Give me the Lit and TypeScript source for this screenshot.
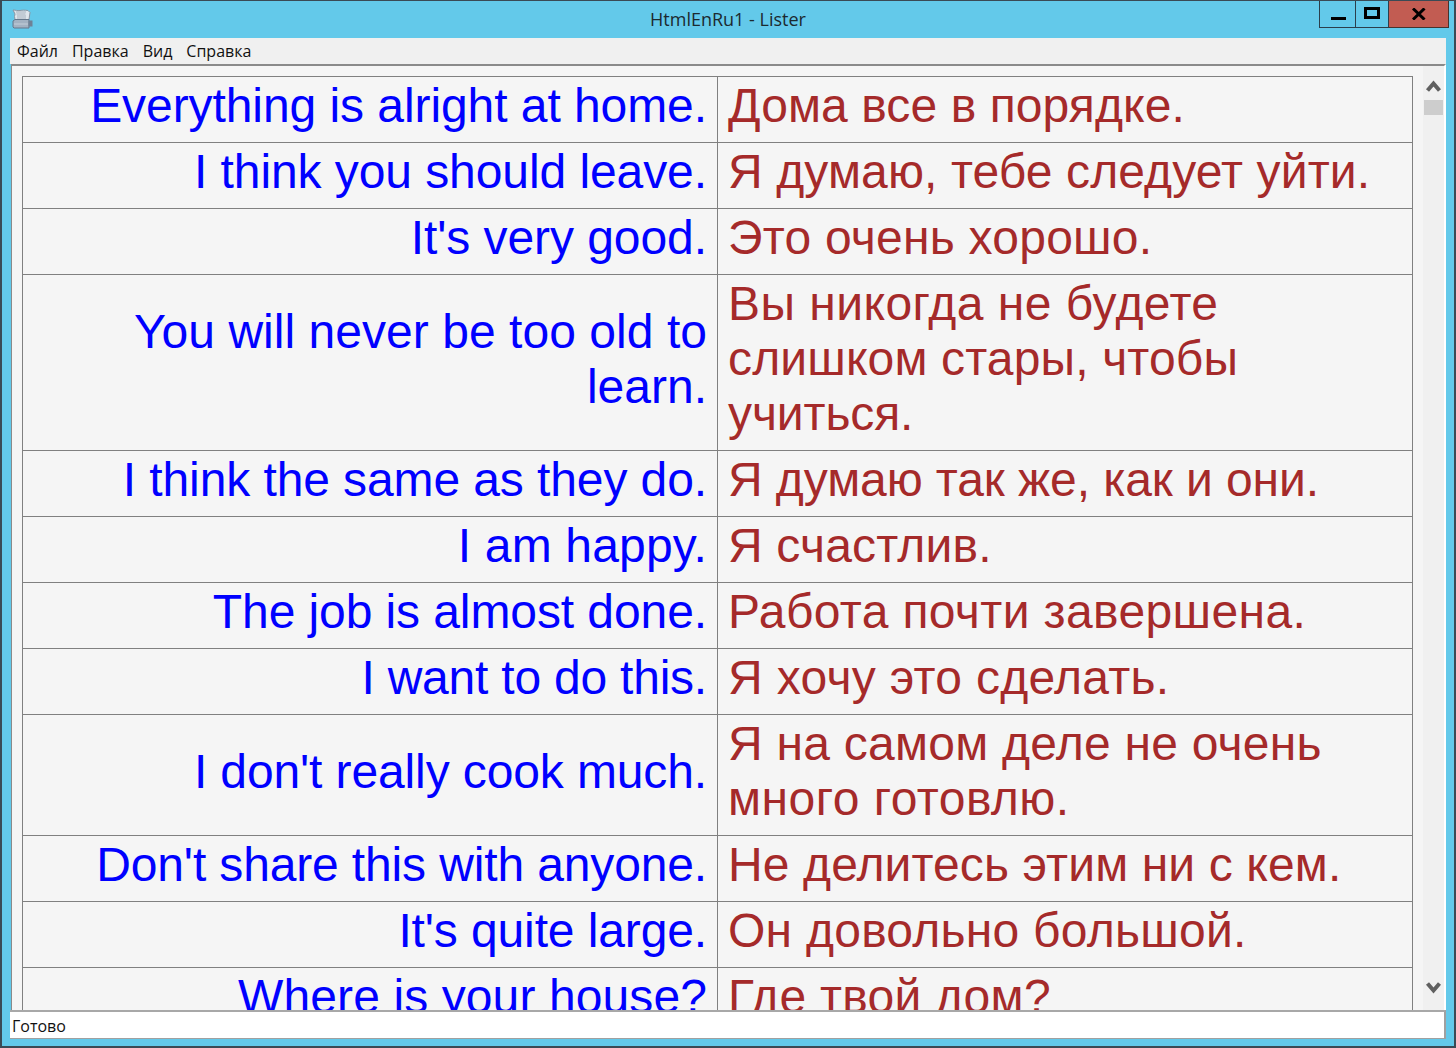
import { LitElement, html, css, svg } from "lit";
import { customElement } from "lit/decorators.js";

type Line = [string, number];
const ROWS: { en: Line[]; ru: Line[] }[] = [
  { en: [["Everything is alright at home.", -0.07]], ru: [["Дома все в порядке.", 0.1]] },
  { en: [["I think you should leave.", -0.08]], ru: [["Я думаю, тебе следует уйти.", 0.12]] },
  { en: [["It's very good.", -0.07]], ru: [["Это очень хорошо.", 0.24]] },
  {
    en: [["You will never be too old to", 0.04], ["learn.", 0]],
    ru: [["Вы никогда не будете", 0.45], ["слишком стары, чтобы", 0.15], ["учиться.", -0.1]],
  },
  { en: [["I think the same as they do.", -0.1]], ru: [["Я думаю так же, как и они.", -0.08]] },
  { en: [["I am happy.", 0.18]], ru: [["Я счастлив.", 0.18]] },
  { en: [["The job is almost done.", -0.09]], ru: [["Работа почти завершена.", 0.39]] },
  { en: [["I want to do this.", -0.22]], ru: [["Я хочу это сделать.", 0.32]] },
  {
    en: [["I don't really cook much.", -0.12]],
    ru: [["Я на самом деле не очень", 0.25], ["много готовлю.", 0.5]],
  },
  { en: [["Don't share this with anyone.", -0.14]], ru: [["Не делитесь этим ни с кем.", 0.12]] },
  { en: [["It's quite large.", -0.12]], ru: [["Он довольно большой.", 0.25]] },
  { en: [["Where is your house?", 0.1]], ru: [["Где твой дом?", 0.3]] },
];

@customElement("app-root")
export class AppRoot extends LitElement {
  static styles = css`
    :host { display: block; width: 1456px; height: 1048px; }
    .window {
      box-sizing: border-box; width: 1456px; height: 1048px;
      background: #63c9ea; border: 2px solid #3a4a55; border-width: 1px 2px 2px 2px;
      display: flex; flex-direction: column;
      font-family: "Liberation Sans", Arial, sans-serif; overflow: hidden;
    }
    .titlebar { height: 37px; flex: none; display: flex; position: relative; }
    .app-icon { margin: 8px 0 0 10px; width: 21px; height: 21px; }
    .title {
      position: absolute; left: 0; right: 0; top: 8px; text-align: center;
      font: 18px/20px "Open Sans", "Noto Sans", sans-serif; color: #1c2a30;
    }
    .caption { position: absolute; top: -1px; left: 1317px; display: flex; height: 28px; }
    .btn {
      box-sizing: border-box; height: 28px; border: 1px solid #2b3f4c; border-top: 0;
      display: flex; align-items: center; justify-content: center;
    }
    .btn.min { width: 37px; }
    .btn.max { width: 33px; border-left: 0; }
    .btn.close { width: 60px; background: #c25c52; border-left: 0; border-color: #46332f; }
    .client { margin: 0 8px 7px 8px; flex: 1; display: flex; flex-direction: column; min-height: 0; }
    .menubar {
      height: 26px; flex: none; background: #f0f0f0; display: flex; gap: 14px;
      padding-left: 7px; align-items: center;
      font: 16px/18px "Open Sans", "Noto Sans", sans-serif; color: #111;
    }
    .view {
      flex: 1; min-height: 0; display: flex; background: #f5f5f5;
      border-top: 2px solid #8a8a8a; margin-left: 1px;
      border-left: 1px solid #8a8a8a; border-right: 2px solid #fff; overflow: hidden;
    }
    .scrollpane { flex: 1; min-width: 0; overflow: hidden; padding: 10px 10px 0 10px; }
    table {
      width: 1391px; border-collapse: collapse; table-layout: fixed;
      font-size: 48px; line-height: 55px;
    }
    td { border: 1px solid #808080; padding: 1px 10px 9px; box-sizing: border-box; vertical-align: middle; }
    td.en { color: #0000ff; text-align: right; width: 695px; }
    td.ru { color: #a52a2a; text-align: left; }
    .ln { display: block; white-space: nowrap; }
    .scrollbar {
      width: 21px; flex: none; background: #f0f0f0; display: flex; flex-direction: column;
      align-items: center;
    }
    .arrow { width: 17px; height: 14px; }
    .arrow.up { margin-top: 14px; }
    .arrow.down { margin-top: auto; margin-bottom: 16px; }
    .thumb { width: 19px; height: 15px; background: #cdcdcd; margin-top: 6px; }
    .status {
      height: 29px; flex: none; background: #fff; box-sizing: border-box;
      border-top: 2px solid #a8a8a8; border-bottom: 1px solid #a0a0a0; border-right: 2px solid #a0a0a0;
      display: flex; align-items: center;
      font: 16px/18px "Open Sans", "Noto Sans", sans-serif; color: #111; padding: 2px 0 0 2px;
    }
  `;

  private icon() {
    return svg`<svg class="app-icon" viewBox="0 0 21 21">
      <path d="M1 1c3 0 4 1 7 .5s4-.5 8 0l2 2-1 7H3l-.5-3L3 5z" fill="#dfe6ec" stroke="#8a96a3" stroke-width="1"/>
      <path d="M4 3h10M4.500 5h9M5 7h9M5 9h9" stroke="#a4b0bc" stroke-width="1"/>
      <path d="M1 12l2-1.500h14V19H2l-1-1z" fill="#a3b2c2" stroke="#66778a" stroke-width="1"/>
      <path d="M2 15h14" stroke="#c3ced9" stroke-width="1"/>
      <rect x="16.500" y="11.500" width="4" height="6" fill="#6f8196"/>
    </svg>`;
  }

  private cell(lines: Line[]) {
    return lines.map(
      ([t, sp]) => html`<span class="ln" style="letter-spacing:${sp}px">${t}</span>`
    );
  }

  render() {
    return html`<div class="window">
      <div class="titlebar">
        ${this.icon()}
        <div class="title">HtmlEnRu1 - Lister</div>
        <div class="caption">
          <div class="btn min"><svg width="16" height="14" viewBox="0 0 16 14"><rect x="1" y="10" width="15" height="3" fill="#000"/></svg></div>
          <div class="btn max"><svg width="16" height="14" viewBox="0 0 16 14"><path d="M0 0h16v12H0z M3 3v6h10V3z" fill="#000" fill-rule="evenodd"/></svg></div>
          <div class="btn close"><svg width="14" height="12" viewBox="0 0 14 12"><path d="M1 0.500 12.500 11.500M12.500 0.500 1 11.500" stroke="#000" stroke-width="3" fill="none"/></svg></div>
        </div>
      </div>
      <div class="client">
        <div class="menubar"><span>Файл</span><span>Правка</span><span>Вид</span><span>Справка</span></div>
        <div class="view">
          <div class="scrollpane">
            <table><tbody>
              ${ROWS.map((r) => html`<tr><td class="en">${this.cell(r.en)}</td><td class="ru">${this.cell(r.ru)}</td></tr>`)}
            </tbody></table>
          </div>
          <div class="scrollbar">
            <svg class="arrow up" viewBox="0 0 17 14"><path d="M2.500 10.500 8.500 3.500 14.500 10.500" fill="none" stroke="#606060" stroke-width="4"/></svg>
            <div class="thumb"></div>
            <svg class="arrow down" viewBox="0 0 17 14"><path d="M2.500 3.500 8.500 10.500 14.500 3.500" fill="none" stroke="#606060" stroke-width="4"/></svg>
          </div>
        </div>
        <div class="status">Готово</div>
      </div>
    </div>`;
  }
}
